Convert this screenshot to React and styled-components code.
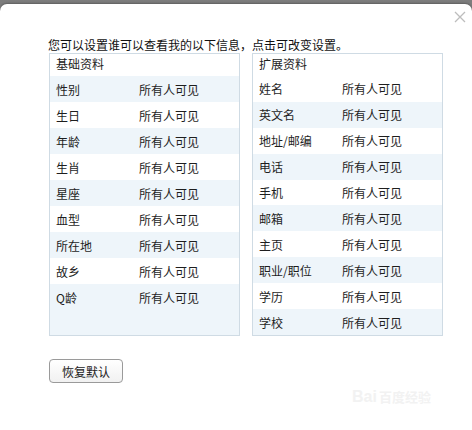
import React from "react";
import styled, { createGlobalStyle } from "styled-components";

const GlobalStyle = createGlobalStyle`
  html, body {
    margin: 0;
    padding: 0;
    background: #8f8f8f;
  }
  body {
    font-family: "Noto Sans CJK SC", "Liberation Sans", sans-serif;
    font-size: 12px;
    color: #1e1e1e;
  }
`;

const basic = [
  ["性别", "所有人可见"],
  ["生日", "所有人可见"],
  ["年龄", "所有人可见"],
  ["生肖", "所有人可见"],
  ["星座", "所有人可见"],
  ["血型", "所有人可见"],
  ["所在地", "所有人可见"],
  ["故乡", "所有人可见"],
  ["Q龄", "所有人可见"],
];

const extended = [
  ["姓名", "所有人可见"],
  ["英文名", "所有人可见"],
  ["地址/邮编", "所有人可见"],
  ["电话", "所有人可见"],
  ["手机", "所有人可见"],
  ["邮箱", "所有人可见"],
  ["主页", "所有人可见"],
  ["职业/职位", "所有人可见"],
  ["学历", "所有人可见"],
  ["学校", "所有人可见"],
];

const Panel = ({ title, rows, shadeOdd }) => {
  return (
    <Box>
      <Header>{title}</Header>
      {rows.map((row, index) => {
        const shaded = shadeOdd ? index % 2 === 0 : index % 2 === 1;
        return (
          <Row key={index} $shaded={shaded}>
            <Label>{row[0]}</Label>
            <Value>{row[1]}</Value>
          </Row>
        );
      })}
      <Filler />
    </Box>
  );
};

const App = () => {
  return (
    <>
      <GlobalStyle />
      <Backdrop>
        <Dialog>
          <Close aria-label="关闭">
            <svg width="12" height="12" viewBox="0 0 12 12">
              <path
                d="M1 1 L11 11 M11 1 L1 11"
                stroke="#bdbdbd"
                strokeWidth="1.3"
                fill="none"
              />
            </svg>
          </Close>
          <Title>您可以设置谁可以查看我的以下信息，点击可改变设置。</Title>
          <Panels>
            <Panel title="基础资料" rows={basic} shadeOdd />
            <Panel title="扩展资料" rows={extended} />
          </Panels>
          <ResetButton>恢复默认</ResetButton>
          <Watermark>
            Bai<WatermarkCn>百度经验</WatermarkCn>
          </Watermark>
        </Dialog>
      </Backdrop>
    </>
  );
};

export default App;

const Backdrop = styled.div`
  height: 430px;
  padding-top: 4px;
  box-sizing: border-box;
  background: linear-gradient(#7d7d7d, #a3a3a3);
  overflow: hidden;
`;

const Dialog = styled.div`
  position: relative;
  height: 426px;
  background: #fff;
  border-radius: 7px 7px 0 0;
  box-shadow: 0 -1px 2px rgba(0, 0, 0, 0.25);
  padding: 33px 0 0 49px;
  box-sizing: border-box;
`;

const Close = styled.div`
  position: absolute;
  top: 5px;
  right: 6px;
  width: 12px;
  height: 12px;
  cursor: pointer;
`;

const Title = styled.div`
  height: 16px;
  line-height: 16px;
  font-size: 12px;
  margin-left: -1px;
  color: #111;
`;

const Panels = styled.div`
  display: grid;
  grid-template-columns: 191px 191px;
  column-gap: 12px;
`;

const Box = styled.div`
  display: flex;
  flex-direction: column;
  height: 283px;
  border: 1px solid #cfdbe4;
  box-sizing: border-box;
  background: #fff;
`;

const Header = styled.div`
  height: 22px;
  line-height: 20px;
  padding-left: 6px;
  color: #222;
`;

const Row = styled.div`
  display: flex;
  align-items: center;
  height: 26px;
  padding-left: 6px;
  background: ${(p) => (p.$shaded ? "#eef5fa" : "#fff")};
`;

const Label = styled.span`
  width: 83px;
  flex-shrink: 0;
`;

const Value = styled.span`
  color: #1e1e1e;
`;

const Filler = styled.div`
  flex: 1;
  background: #eef5fa;
`;

const ResetButton = styled.button`
  display: block;
  margin-top: 23px;
  width: 74px;
  height: 24px;
  padding: 0;
  border: 1px solid #9a9a9a;
  border-radius: 4px;
  background: linear-gradient(#ffffff, #f1f1f1);
  font-family: "Noto Sans CJK SC", "Liberation Sans", sans-serif;
  font-size: 12px;
  color: #222;
`;

const Watermark = styled.div`
  position: absolute;
  left: 352px;
  top: 383px;
  font-family: "Liberation Sans", sans-serif;
  font-size: 16px;
  font-weight: bold;
  color: #f2f2f2;
  pointer-events: none;
`;

const WatermarkCn = styled.span`
  font-family: "Noto Sans CJK SC", sans-serif;
  font-size: 13px;
  margin-left: 2px;
`;
